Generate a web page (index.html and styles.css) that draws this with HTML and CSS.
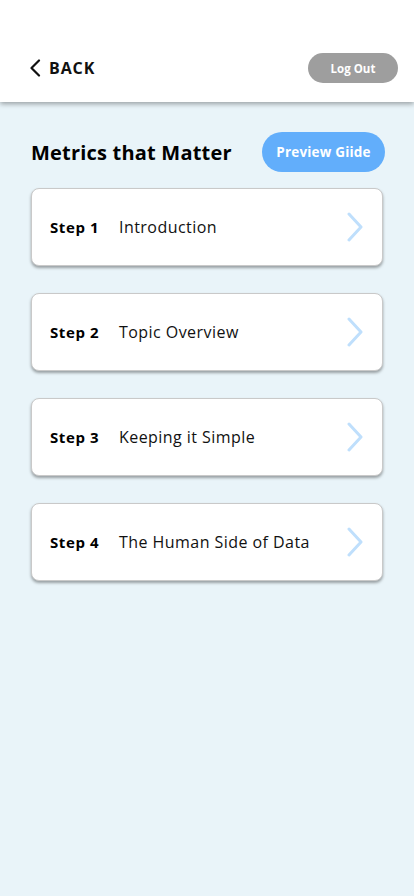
FILE: index.html
```html
<!DOCTYPE html>
<html lang="en">
<head>
<meta charset="utf-8">
<title>Metrics that Matter</title>
<link rel="stylesheet" href="styles.css">
</head>
<body>
<header class="topbar">
  <a class="back">
    <svg class="back-icon" width="12" height="18" viewBox="0 0 12 18"><path d="M10 1.5 L2.5 9 L10 16.5" fill="none" stroke="#111" stroke-width="2.2" stroke-linecap="round" stroke-linejoin="round"/></svg>
    <span>BACK</span>
  </a>
  <button class="logout">Log Out</button>
</header>
<main class="content">
  <div class="title-row">
    <h1>Metrics that Matter</h1>
    <button class="preview">Preview Giide</button>
  </div>
  <ul class="steps">
    <li class="step"><span class="step-no">Step 1</span><span class="step-name">Introduction</span><svg class="chev" width="16" height="30" viewBox="0 0 16 30"><path d="M2 2 L14 15 L2 28" fill="none" stroke="#bfdffc" stroke-width="3" stroke-linecap="round" stroke-linejoin="round"/></svg></li>
    <li class="step"><span class="step-no">Step 2</span><span class="step-name">Topic Overview</span><svg class="chev" width="16" height="30" viewBox="0 0 16 30"><path d="M2 2 L14 15 L2 28" fill="none" stroke="#bfdffc" stroke-width="3" stroke-linecap="round" stroke-linejoin="round"/></svg></li>
    <li class="step"><span class="step-no">Step 3</span><span class="step-name">Keeping it Simple</span><svg class="chev" width="16" height="30" viewBox="0 0 16 30"><path d="M2 2 L14 15 L2 28" fill="none" stroke="#bfdffc" stroke-width="3" stroke-linecap="round" stroke-linejoin="round"/></svg></li>
    <li class="step"><span class="step-no">Step 4</span><span class="step-name">The Human Side of Data</span><svg class="chev" width="16" height="30" viewBox="0 0 16 30"><path d="M2 2 L14 15 L2 28" fill="none" stroke="#bfdffc" stroke-width="3" stroke-linecap="round" stroke-linejoin="round"/></svg></li>
  </ul>
</main>
</body>
</html>
```
FILE: styles.css
```css
* { box-sizing: border-box; }
html, body { margin: 0; padding: 0; }
body {
  width: 414px;
  min-height: 896px;
  background: #e9f4f9;
  font-family: "Open Sans", "Noto Sans", sans-serif;
  color: #000;
}
.topbar {
  height: 102px;
  background: #fff;
  display: flex;
  align-items: center;
  justify-content: space-between;
  padding: 0 16px 0 29px;
  padding-top: 34px;
  box-shadow: 0 2px 5px rgba(0,0,0,0.35);
  position: relative;
  z-index: 1;
}
.back {
  display: flex;
  align-items: center;
  gap: 8px;
  font-weight: 700;
  font-size: 16px;
  letter-spacing: 0.9px;
  color: #111;
}
.back-icon { display: block; }
.logout {
  width: 90px;
  height: 30px;
  border: none;
  border-radius: 15px;
  background: #9e9e9e;
  color: #fff;
  font-family: inherit;
  font-weight: 700;
  font-size: 11.5px;
  padding: 0;
}
.content { padding: 30px 31px 0 31px; }
.title-row {
  display: flex;
  align-items: center;
  justify-content: space-between;
  height: 40px;
}
h1 {
  margin: 0;
  font-size: 20px;
  font-weight: 700;
  letter-spacing: 0.2px;
}
.preview {
  width: 123px;
  height: 40px;
  margin-right: -2px;
  border: none;
  border-radius: 20px;
  background: #62aefb;
  color: #fff;
  font-family: inherit;
  font-weight: 700;
  font-size: 13.5px;
  padding: 0;
  letter-spacing: 0.2px;
}
.steps {
  list-style: none;
  margin: 16px 0 0;
  padding: 0;
  display: flex;
  flex-direction: column;
  gap: 27px;
}
.step {
  height: 78px;
  background: #fff;
  border: 1px solid #c9c9c9;
  border-radius: 8px;
  box-shadow: 0 2px 3px rgba(0,0,0,0.35);
  display: flex;
  align-items: center;
  padding: 0 19px 0 18px;
}
.step-no {
  font-weight: 700;
  font-size: 15px;
  letter-spacing: 0.6px;
  width: 69px;
  flex-shrink: 0;
}
.step-name {
  font-size: 16px;
  font-weight: 400;
  letter-spacing: 0.45px;
  color: #111;
  flex: 1;
}
.chev { display: block; }
```
